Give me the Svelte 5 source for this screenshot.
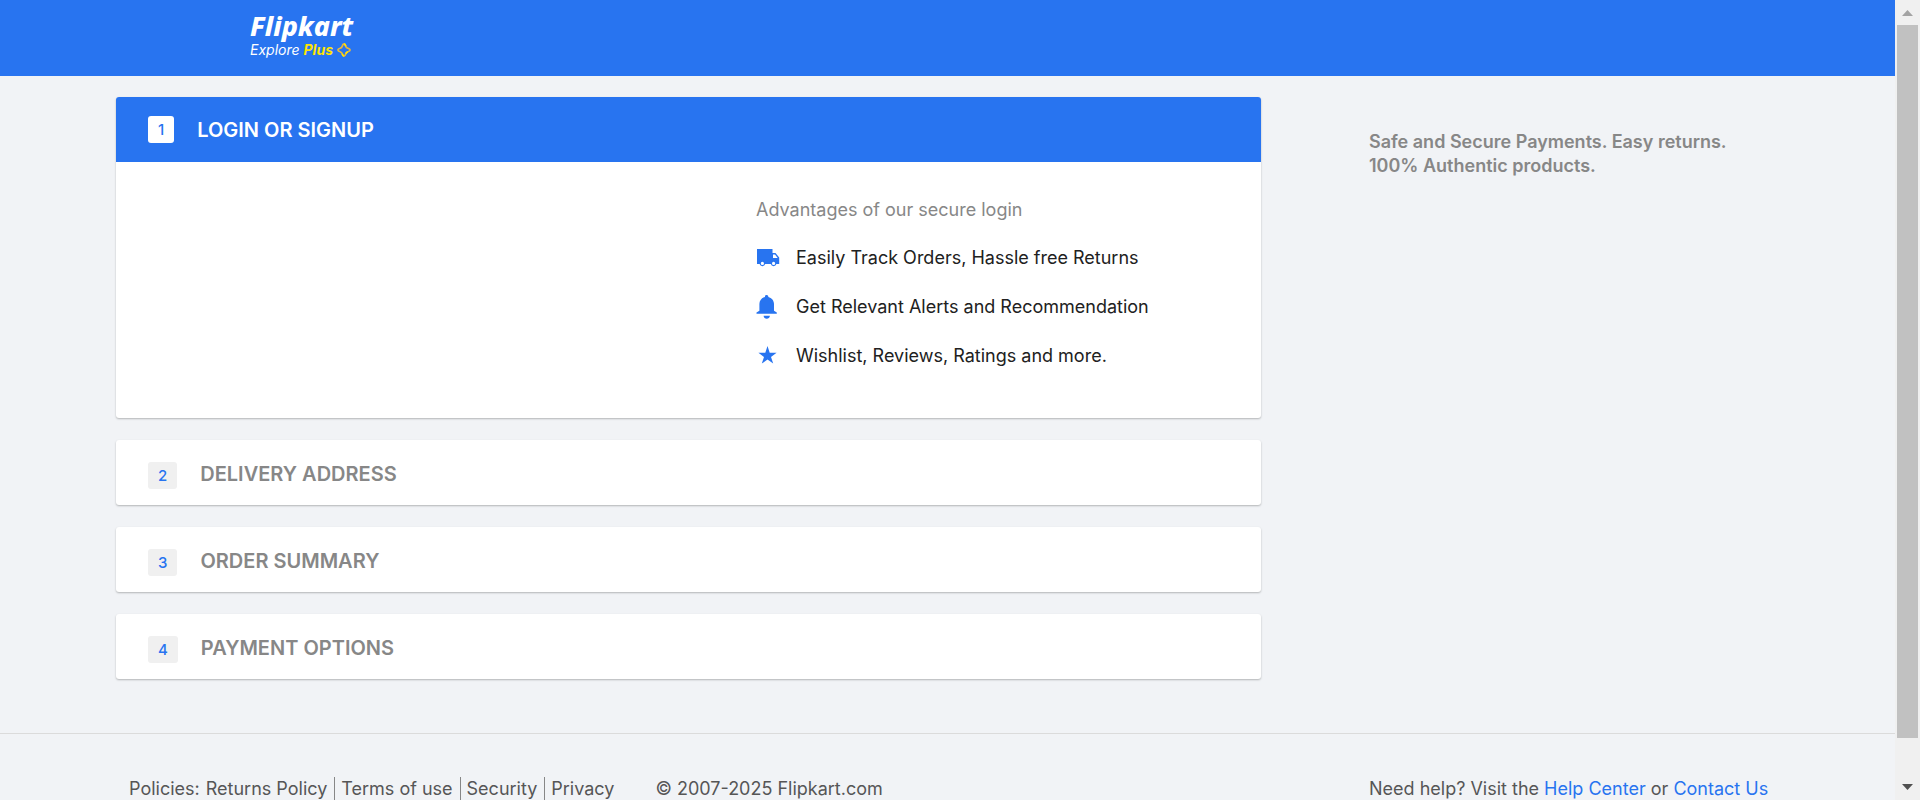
<script>
  const steps = [
    { number: 2, title: 'DELIVERY ADDRESS' },
    { number: 3, title: 'ORDER SUMMARY' },
    { number: 4, title: 'PAYMENT OPTIONS' }
  ];
  const policies = ['Returns Policy', 'Terms of use', 'Security', 'Privacy'];
</script>

<div class="window">
  <div class="page">
    <header>
      <a class="logo" href="#home">
        <span class="brand">Flipkart</span>
        <span class="tagline">
          <span>Explore</span> <b>Plus</b>
          <svg width="14" height="14" viewBox="0 0 14 14" aria-hidden="true">
            <path d="M7 .9 C7.9 .9 8.4 1.8 8.8 3.2 C9.1 4.5 9.5 4.9 10.8 5.2 C12.2 5.6 13.1 6.1 13.1 7 C13.1 7.9 12.2 8.4 10.8 8.8 C9.5 9.1 9.1 9.5 8.8 10.8 C8.4 12.2 7.9 13.1 7 13.1 C6.1 13.1 5.6 12.2 5.2 10.8 C4.9 9.5 4.5 9.1 3.2 8.8 C1.8 8.4 .9 7.9 .9 7 C.9 6.1 1.8 5.6 3.2 5.2 C4.5 4.9 4.9 4.5 5.2 3.2 C5.6 1.8 6.1 .9 7 .9 Z" fill="none" stroke="#e9b83b" stroke-width="1.7" />
            <path d="M7 .9 C7.9 .9 8.4 1.8 8.8 3.2 M5.2 10.8 C5.6 12.2 6.1 13.1 7 13.1 M10.8 8.8 C9.5 9.1 9.1 9.5 8.8 10.8" fill="none" stroke="#ffe500" stroke-width="1.7" />
          </svg>
        </span>
      </a>
    </header>

    <main>
      <div class="steps">
        <section class="card">
          <h2 class="heading active"><span class="badge">1</span>LOGIN OR SIGNUP</h2>
          <div class="login">
            <div class="advantages">
              <p>Advantages of our secure login</p>
              <ul>
                <li>
                  <svg width="24" height="24" viewBox="0 0 24 24" aria-hidden="true">
                    <path fill-rule="evenodd" d="M1 1.5H16.5V5.5H19.5L23.2 10V16.5H20.4A2.9 2.9 0 0 1 14.8 16.5H9.2A2.9 2.9 0 0 1 3.6 16.5H1V2.5Z M17 7V10.5H21.7L19 7Z M6.4 14.3A1.6 1.6 0 1 0 6.4 17.5A1.6 1.6 0 1 0 6.4 14.3Z M17.6 14.3A1.6 1.6 0 1 0 17.6 17.5A1.6 1.6 0 1 0 17.6 14.3Z" transform="translate(0 1.5)" />
                  </svg>
                  <span>Easily Track Orders, Hassle free Returns</span>
                </li>
                <li>
                  <svg width="24" height="24" viewBox="0 0 24 24" aria-hidden="true">
                    <path d="M10.7 0A1.7 1.7 0 0 1 12.3 2C15.8 2.8 18 5.7 18 9V15.8L20.8 17.6V18.7H.5V17.6L3.4 15.8V9C3.4 5.7 5.6 2.8 9 2A1.7 1.7 0 0 1 10.7 0Z M7.6 20.8H13.9C13.9 24.6 7.6 24.6 7.6 20.8Z" />
                  </svg>
                  <span>Get Relevant Alerts and Recommendation</span>
                </li>
                <li>
                  <svg width="24" height="24" viewBox="0 0 24 24" aria-hidden="true">
                    <path d="M11.5 2L13.7 8.8H20.6L15 12.9L17.2 19.6L11.5 15.5L5.8 19.6L8 12.9L2.4 8.8H9.3Z" />
                  </svg>
                  <span>Wishlist, Reviews, Ratings and more.</span>
                </li>
              </ul>
            </div>
          </div>
        </section>

        {#each steps as step}
          <section class="card">
            <h2 class="heading"><span class="badge">{step.number}</span>{step.title}</h2>
          </section>
        {/each}
      </div>

      <aside>
        <p>Safe and Secure Payments. Easy returns. 100% Authentic products.</p>
      </aside>
    </main>

    <footer>
      <div class="policies">
        <span class="label">Policies:</span>
        {#each policies as policy}
          <a href="#policy">{policy}</a>
        {/each}
        <span class="copyright">© 2007-2025 Flipkart.com</span>
      </div>
      <div class="help">
        Need help? Visit the <a href="#help">Help Center</a> or <a href="#contact">Contact Us</a>
      </div>
    </footer>
  </div>

  <div class="scrollbar" aria-hidden="true">
    <svg width="11" height="6" viewBox="0 0 11 6"><path d="M0 6L5.5 0L11 6Z" fill="#a3a3a3" /></svg>
    <div class="track"><div class="thumb"></div></div>
    <svg width="11" height="6" viewBox="0 0 11 6"><path d="M0 0H11L5.5 6Z" fill="#505050" /></svg>
  </div>
</div>

<style>
  :global(body) {
    margin: 0;
    background: #f1f3f6;
  }
  .window {
    display: flex;
    height: 100vh;
    overflow: hidden;
    font-family: Inter, "Liberation Sans", sans-serif;
    font-size: 18px;
    line-height: 24px;
    color: #212121;
  }
  .page {
    flex: 1;
    min-width: 0;
  }
  a {
    color: inherit;
    text-decoration: none;
  }
  header {
    box-sizing: border-box;
    height: 76px;
    padding: 12px 250px;
    background: #2874f0;
  }
  .logo {
    display: inline-flex;
    flex-direction: column;
    color: #fff;
    font-style: italic;
  }
  .brand {
    font-family: "Noto Sans", sans-serif;
    font-size: 27px;
    line-height: 28px;
    font-weight: 800;
  }
  .tagline {
    display: flex;
    align-items: center;
    gap: 4px;
    font-size: 14px;
    line-height: 20px;
  }
  .tagline b {
    color: #ffe500;
  }
  main {
    display: grid;
    grid-template-columns: 1145fr 410fr;
    gap: 108px;
    padding: 21px 116px 54px;
  }
  .steps {
    display: grid;
    gap: 22px;
  }
  .card {
    background: #fff;
    border-radius: 3px;
    box-shadow: 0 1px 2px rgba(0, 0, 0, 0.26);
  }
  .heading {
    display: flex;
    align-items: center;
    box-sizing: border-box;
    height: 65px;
    margin: 0;
    padding: 2px 32px 0;
    font-size: 20px;
    font-weight: 600;
    font-optical-sizing: none;
    color: #878787;
  }
  .badge {
    margin: 4px 23px 0 0;
    padding: 0 10px;
    border-radius: 3px;
    background: #f0f0f0;
    font-size: 15px;
    line-height: 27px;
    font-weight: 500;
    color: #2874f0;
  }
  .active {
    padding-top: 0;
    border-radius: 3px 3px 0 0;
    background: #2874f0;
    color: #fff;
  }
  .active .badge {
    margin-top: 0;
    background: #fff;
  }
  .login {
    display: grid;
    grid-template-columns: 640fr 505fr;
    min-height: 256px;
  }
  .advantages {
    grid-column: 2;
    padding-top: 36px;
  }
  .advantages p {
    margin: 0;
    color: #878787;
  }
  ul {
    display: grid;
    gap: 25px;
    margin: 24px 0 0;
    padding: 0;
    list-style: none;
  }
  li {
    display: flex;
    gap: 16px;
  }
  li svg {
    fill: #2874f0;
  }
  aside p {
    max-width: 380px;
    margin: 0;
    padding-top: 33px;
    font-weight: 600;
    color: #878787;
  }
  footer {
    display: grid;
    grid-template-columns: 1132fr 410fr;
    gap: 108px;
    padding: 43px 116px 44px 129px;
    border-top: 1px solid #dbdbdb;
    color: #565656;
  }
  .policies {
    display: flex;
    white-space: nowrap;
  }
  .label {
    margin-right: 6px;
  }
  .policies a {
    padding-right: 7px;
    margin-right: 6px;
    border-right: 1px solid #878787;
  }
  .policies a:last-of-type {
    border: 0;
    margin-right: 34px;
  }
  .help {
    white-space: nowrap;
  }
  .help a {
    color: #2874f0;
  }
  .scrollbar {
    display: flex;
    flex-direction: column;
    align-items: center;
    justify-content: space-between;
    box-sizing: border-box;
    width: 25px;
    padding: 10px 0;
    background: #f0f0f0;
  }
  .track {
    flex: 1;
    width: 21px;
    margin: 9px 0;
  }
  .thumb {
    height: 95%;
    background: #c1c1c1;
  }
</style>
